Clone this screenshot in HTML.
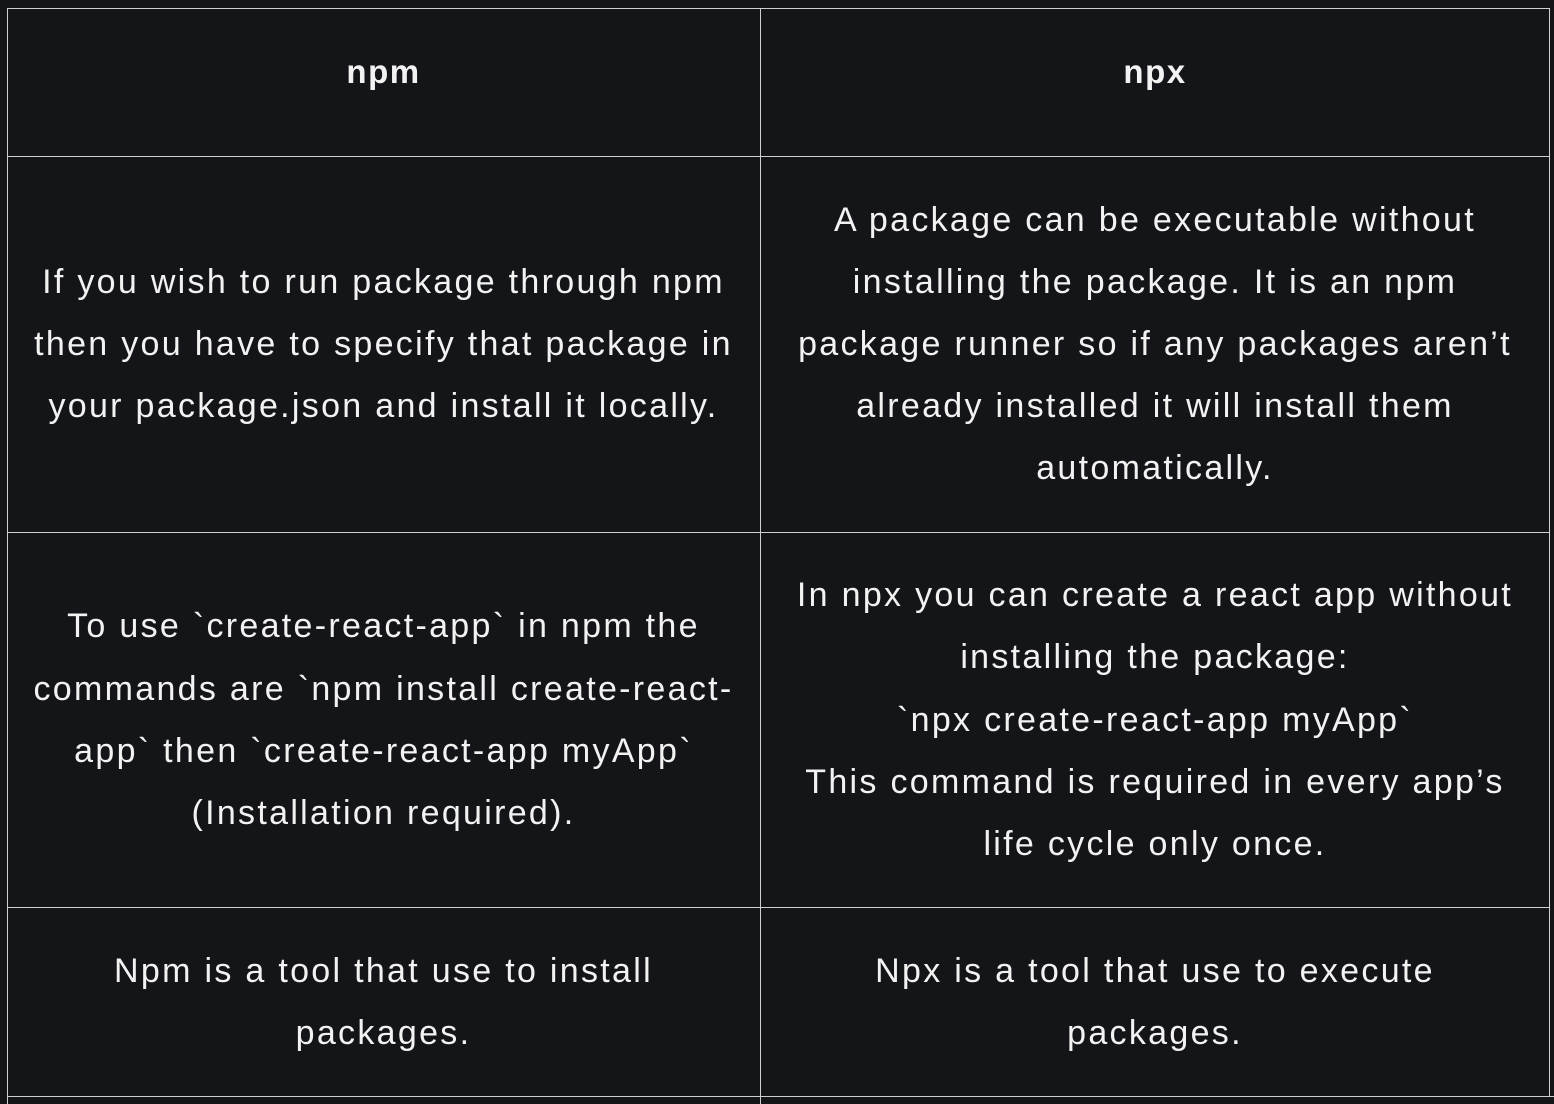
<!DOCTYPE html><html><head><meta charset="utf-8"><style>
body{margin:0;width:1554px;height:1104px;background:#141519;overflow:hidden;position:relative;font-family:"Liberation Sans",sans-serif;color:#f2f2f2}
.h{position:absolute;background:#cfcfcf;height:1px}
.v{position:absolute;background:#cfcfcf;width:1px}
.t{position:absolute;height:62px;line-height:62px;font-size:34px;text-align:center;white-space:nowrap;letter-spacing:2.3px}
.c1{left:7px;width:753px}.c2{left:761px;width:788px}
.b{font-weight:bold;font-size:33px;letter-spacing:1.5px}
</style></head><body>
<div class="h" style="left:7px;width:1543px;top:8px"></div>
<div class="h" style="left:7px;width:1543px;top:156px"></div>
<div class="h" style="left:7px;width:1543px;top:532px"></div>
<div class="h" style="left:7px;width:1543px;top:907px"></div>
<div class="h" style="left:7px;width:1547px;top:1096px"></div>
<div class="v" style="left:7px;top:8px;height:1096px"></div>
<div class="v" style="left:760px;top:8px;height:1096px"></div>
<div class="v" style="left:1549px;top:8px;height:1089px"></div>

<div class="t c1 b" style="top:41px">npm</div>
<div class="t c2 b" style="top:41px">npx</div>

<div class="t c1" style="top:251px">If you wish to run package through npm</div>
<div class="t c1" style="top:313px">then you have to specify that package in</div>
<div class="t c1" style="top:375px">your package.json and install it locally.</div>

<div class="t c2" style="top:189px">A package can be executable without</div>
<div class="t c2" style="top:251px">installing the package. It is an npm</div>
<div class="t c2" style="top:313px">package runner so if any packages aren’t</div>
<div class="t c2" style="top:375px">already installed it will install them</div>
<div class="t c2" style="top:437px">automatically.</div>

<div class="t c1" style="top:595px">To use `create-react-app` in npm the</div>
<div class="t c1" style="top:658px">commands are `npm install create-react-</div>
<div class="t c1" style="top:720px">app` then `create-react-app myApp`</div>
<div class="t c1" style="top:782px">(Installation required).</div>

<div class="t c2" style="top:564px">In npx you can create a react app without</div>
<div class="t c2" style="top:626px">installing the package:</div>
<div class="t c2" style="top:689px">`npx create-react-app myApp`</div>
<div class="t c2" style="top:751px">This command is required in every app’s</div>
<div class="t c2" style="top:813px">life cycle only once.</div>

<div class="t c1" style="top:940px">Npm is a tool that use to install</div>
<div class="t c1" style="top:1002px">packages.</div>
<div class="t c2" style="top:940px">Npx is a tool that use to execute</div>
<div class="t c2" style="top:1002px">packages.</div>
</body></html>
